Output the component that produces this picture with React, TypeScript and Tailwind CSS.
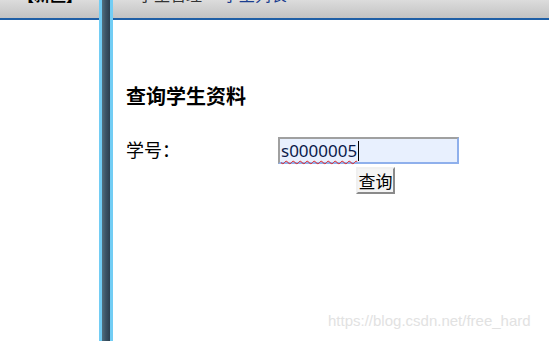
import React from 'react';

export default function App() {
  const cjk = { fontFamily: '"Microsoft YaHei", "Noto Sans CJK SC", sans-serif' };

  return (
    <div className="relative flex h-[341px] w-[549px] overflow-hidden bg-white" style={cjk}>
      {/* left frame */}
      <div className="flex w-[99px] shrink-0 flex-col">
        <div className="h-[20px] overflow-hidden border-b-2 border-[#1f5fa6] bg-gradient-to-b from-[#dcdcdc] to-[#c3c3c3]">
          <div className="-mt-[15px] pl-[18px] text-[16px] font-bold leading-[18px] text-black">【新区】</div>
        </div>
      </div>

      {/* divider */}
      <div className="flex w-[14px] shrink-0">
        <div className="w-[3px] bg-[#72cdf4]" />
        <div className="w-[8px] bg-gradient-to-r from-[#52707f] via-[#3a5264] to-[#2c4050]" />
        <div className="w-[3px] bg-[#72cdf4]" />
      </div>

      {/* right frame */}
      <div className="flex min-w-0 flex-1 flex-col">
        <div className="h-[20px] overflow-hidden border-b-2 border-[#1f5fa6] bg-gradient-to-b from-[#dcdcdc] to-[#c3c3c3]">
          <div className="-mt-[15px] flex gap-[6px] pl-[10px] text-[16px] leading-[18px]">
            <span className="text-[#f06020]">&gt;</span>
            <span className="text-[#333]">学生管理</span>
            <span className="text-[#f06020]">&gt;</span>
            <span className="text-[#1a3d8f]">学生列表</span>
          </div>
        </div>

        <div className="pl-[13px] pt-[64px]">
          <h3 className="text-[20px] font-bold leading-[24px] text-black">查询学生资料</h3>

          <div className="mt-[29px] flex items-start">
            <div className="w-[152px] pt-[2px] text-[18px] leading-[20px] text-black">学号：</div>
            <div className="flex w-[181px] flex-col items-center">
              <div className="flex h-[27px] w-[181px] items-center border-2 border-t-[#a0a0a0] border-l-[#a0a0a0] border-r-[#8fb0ec] border-b-[#8fb0ec] bg-[#e8f0fe] pl-[1px]">
                <span
                  className="text-[17px] leading-[20px] text-[#0a1a4a] underline decoration-wavy decoration-[#e02020] decoration-1 underline-offset-[3px]"
                  style={{ fontFamily: '"Microsoft YaHei", "Noto Sans", sans-serif' }}
                >
                  s0000005
                </span>
                <span className="ml-[1px] h-[20px] w-[1px] bg-black" />
              </div>
              <button className="ml-[14px] mt-[3px] flex h-[27px] w-[39px] items-center justify-center whitespace-nowrap border-2 border-t-[#f0f0f0] border-l-[#f0f0f0] border-r-[#8a8a8a] border-b-[#8a8a8a] bg-[#f4f4f4] px-0 text-[17px] leading-[20px] text-black">
                查询
              </button>
            </div>
          </div>
        </div>
      </div>

      {/* watermark */}
      <div
        className="absolute left-[328px] top-[311px] text-[15px] leading-[20px] text-[#e2e2e2]"
        style={{ fontFamily: '"Liberation Sans", Arial, sans-serif' }}
      >
        https://blog.csdn.net/free_hard
      </div>
    </div>
  );
}
